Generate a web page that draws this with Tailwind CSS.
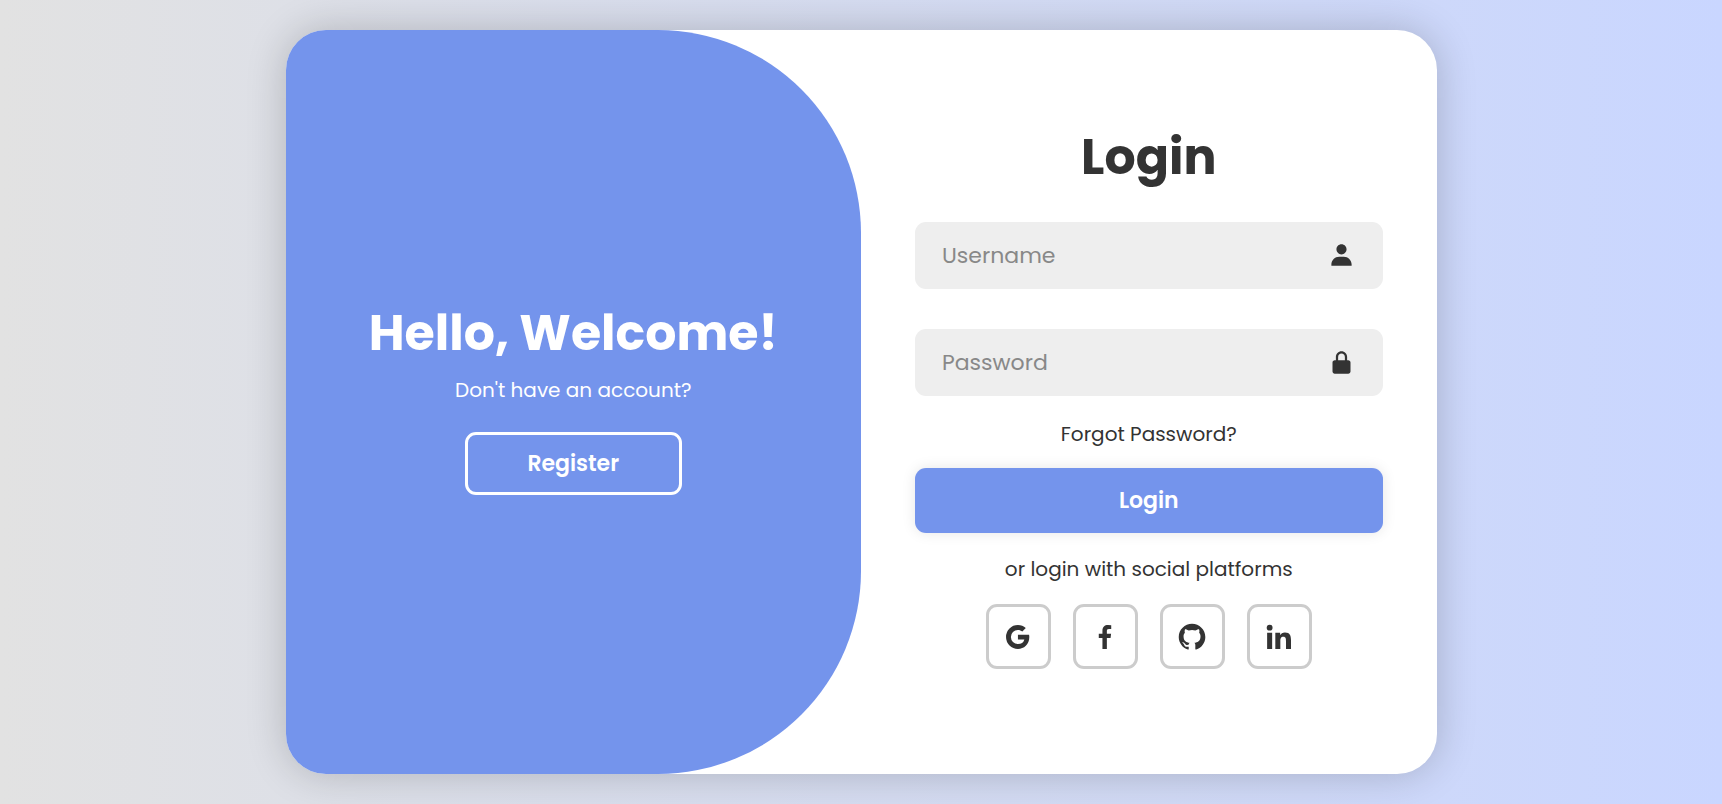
<!DOCTYPE html>
<html lang="en">
<head>
  <meta charset="UTF-8">
  <meta name="viewport" content="width=device-width, initial-scale=1.0">
  <title>Login</title>
  <script src="https://cdn.jsdelivr.net/npm/@tailwindcss/browser@4"></script>
  <style>
    body { font-family: 'Poppins', 'Inter', sans-serif; }
  </style>
</head>
<body class="min-h-screen flex items-center justify-center px-4 bg-linear-90/srgb from-[#e2e2e2] to-[#c9d6ff] text-[#333]">

<!-- Card -->
<main class="w-full max-w-[1151px] min-h-[744px] flex flex-col md:flex-row bg-white rounded-[40px] overflow-hidden shadow-[0_0_40px_rgba(0,0,0,0.2)]">

  <!-- Welcome Panel -->
  <section class="w-full md:w-1/2 flex flex-col items-center justify-center p-8 bg-[#7494ec] text-white text-center md:rounded-r-[203px]">
    <h1 class="text-[49px] leading-12 font-bold">Hello, Welcome!</h1>
    <p class="mt-[19px] text-xl leading-7">Don't have an account?</p>
    <button type="button" class="mt-7 w-[217px] h-[63px] rounded-[11px] border-3 border-white text-[22px] font-semibold cursor-pointer">Register</button>
  </section>

  <!-- Login Form -->
  <section class="w-full md:w-1/2 flex flex-col justify-center px-[54px] py-8 text-center">
    <form action="#">
      <h1 class="text-[49px] leading-11 font-bold">Login</h1>

      <div class="relative mt-[43px]">
        <input type="text" placeholder="Username" aria-label="Username" required class="block w-full h-[67px] pl-[27px] pr-16 rounded-[11px] bg-[#eee] text-[22px] outline-none placeholder:text-[#888]">
        <svg class="absolute right-7 top-5 size-[27px]" viewBox="0 0 24 24" fill="currentColor" aria-hidden="true"><path d="M7.5 6.5C7.5 8.981 9.519 11 12 11s4.5-2.019 4.5-4.5S14.481 2 12 2 7.5 4.019 7.5 6.5zM20 21h1v-1c0-3.859-3.141-7-7-7h-4c-3.86 0-7 3.141-7 7v1h17z"/></svg>
      </div>

      <div class="relative mt-10">
        <input type="password" placeholder="Password" aria-label="Password" required class="block w-full h-[67px] pl-[27px] pr-16 rounded-[11px] bg-[#eee] text-[22px] outline-none placeholder:text-[#888]">
        <svg class="absolute right-7 top-5 size-[27px]" viewBox="0 0 24 24" fill="currentColor" aria-hidden="true"><path d="M20 12c0-1.103-.897-2-2-2h-1V7c0-2.757-2.243-5-5-5S7 4.243 7 7v3H6c-1.103 0-2 .897-2 2v8c0 1.103.897 2 2 2h12c1.103 0 2-.897 2-2v-8zM9 7c0-1.654 1.346-3 3-3s3 1.346 3 3v3H9V7z"/></svg>
      </div>

      <div class="mt-6 text-xl leading-7">
        <a href="#">Forgot Password?</a>
      </div>

      <button type="submit" class="mt-5 w-full h-[65px] rounded-[11px] bg-[#7494ec] text-white text-[22px] font-semibold shadow-[0_0_14px_rgba(0,0,0,0.1)] cursor-pointer">Login</button>

      <p class="mt-[22px] text-xl leading-7">or login with social platforms</p>

      <!-- Social Links -->
      <div class="mt-[21px] flex justify-center gap-[22px]">
        <a href="#" title="Google" class="size-[65px] flex items-center justify-center rounded-[11px] border-3 border-[#ccc]">
          <svg class="size-8" viewBox="0 0 24 24" fill="currentColor"><path d="M20.283 10.356h-8.327v3.451h4.792c-.446 2.193-2.313 3.453-4.792 3.453a5.27 5.27 0 0 1-5.279-5.28 5.27 5.27 0 0 1 5.279-5.279c1.259 0 2.397.447 3.29 1.178l2.6-2.599c-1.584-1.381-3.615-2.233-5.89-2.233a8.908 8.908 0 0 0-8.934 8.934 8.907 8.907 0 0 0 8.934 8.934c4.467 0 8.529-3.249 8.529-8.934 0-.528-.081-1.097-.202-1.625z"/></svg>
        </a>
        <a href="#" title="Facebook" class="size-[65px] flex items-center justify-center rounded-[11px] border-3 border-[#ccc]">
          <svg class="size-8" viewBox="0 0 24 24" fill="currentColor"><path d="M13.397 20.997v-8.196h2.765l.411-3.209h-3.176V7.548c0-.926.258-1.56 1.587-1.56h1.684V3.127A22.336 22.336 0 0 0 14.201 3c-2.444 0-4.122 1.492-4.122 4.231v2.355H7.332v3.209h2.753v8.202h3.312z"/></svg>
        </a>
        <a href="#" title="GitHub" class="size-[65px] flex items-center justify-center rounded-[11px] border-3 border-[#ccc]">
          <svg class="size-8" viewBox="0 0 24 24" fill="currentColor"><path d="M12.026 2c-5.509 0-9.974 4.465-9.974 9.974 0 4.406 2.857 8.145 6.821 9.465.499.09.679-.217.679-.481 0-.237-.008-.865-.011-1.696-2.775.602-3.361-1.338-3.361-1.338-.452-1.152-1.107-1.459-1.107-1.459-.905-.619.069-.605.069-.605 1.002.07 1.527 1.028 1.527 1.028.89 1.524 2.336 1.084 2.902.829.091-.645.351-1.085.635-1.334-2.214-.251-4.542-1.107-4.542-4.93 0-1.087.389-1.979 1.024-2.675-.101-.253-.446-1.268.099-2.64 0 0 .837-.269 2.742 1.021a9.582 9.582 0 0 1 2.496-.336 9.554 9.554 0 0 1 2.496.336c1.906-1.291 2.742-1.021 2.742-1.021.545 1.372.203 2.387.099 2.64.64.696 1.024 1.587 1.024 2.675 0 3.833-2.33 4.675-4.552 4.922.355.308.675.916.675 1.846 0 1.334-.012 2.41-.012 2.737 0 .267.178.577.687.479C19.146 20.115 22 16.379 22 11.974 22 6.465 17.535 2 12.026 2z"/></svg>
        </a>
        <a href="#" title="LinkedIn" class="size-[65px] flex items-center justify-center rounded-[11px] border-3 border-[#ccc]">
          <svg class="size-8" viewBox="0 0 24 24" fill="currentColor"><circle cx="4.983" cy="5.009" r="2.188"/><path d="M9.237 8.855v12.139h3.769v-6.003c0-1.584.298-3.118 2.262-3.118 1.937 0 1.961 1.811 1.961 3.218v5.904H21v-6.657c0-3.27-.704-5.783-4.526-5.783-1.835 0-3.065 1.007-3.568 1.96h-.051v-1.66H9.237zm-6.142 0H6.87v12.139H3.095z"/></svg>
        </a>
      </div>
    </form>
  </section>
</main>

</body>
</html>
